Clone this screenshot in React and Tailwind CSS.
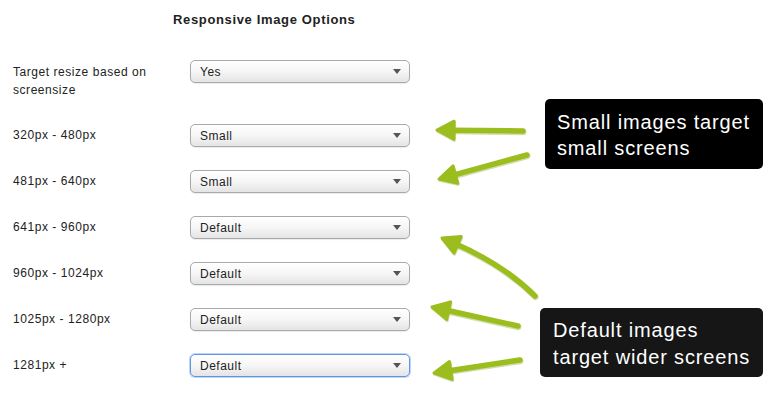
import React from "react";

const rows = [
  { label: "320px - 480px", value: "Small" },
  { label: "481px - 640px", value: "Small" },
  { label: "641px - 960px", value: "Default" },
  { label: "960px - 1024px", value: "Default" },
  { label: "1025px - 1280px", value: "Default" },
  { label: "1281px +", value: "Default", focused: true },
];

// arrows: tail -> tip, optional quadratic control point
const arrows = [
  { tail: [523, 131], tip: [437, 130] },
  { tail: [527, 155], tip: [439, 179] },
  { tail: [535, 296], tip: [442, 238], ctrl: [504, 265] },
  { tail: [518, 326], tip: [432, 307] },
  { tail: [520, 360], tip: [434, 373] },
];

function Arrow({ tail, tip, ctrl }) {
  const from = ctrl || tail;
  const dx = tip[0] - from[0];
  const dy = tip[1] - from[1];
  const len = Math.hypot(dx, dy);
  const ux = dx / len;
  const uy = dy / len;
  const L = 17;
  const W = 18;
  const bx = tip[0] - ux * L;
  const by = tip[1] - uy * L;
  const nx = -uy;
  const ny = ux;
  const head = `${tip[0]},${tip[1]} ${bx + (nx * W) / 2},${by + (ny * W) / 2} ${bx - (nx * W) / 2},${by - (ny * W) / 2}`;
  const sx = bx + ux * 3;
  const sy = by + uy * 3;
  const d = ctrl
    ? `M${tail[0]},${tail[1]} Q${ctrl[0]},${ctrl[1]} ${sx},${sy}`
    : `M${tail[0]},${tail[1]} L${sx},${sy}`;
  return (
    <g>
      <path d={d} fill="none" stroke="#7f9a1a" strokeOpacity="0.35" strokeWidth="6" strokeLinecap="round" transform="translate(0.5,1.2)" />
      <polygon points={head} fill="#7f9a1a" fillOpacity="0.35" stroke="#7f9a1a" strokeOpacity="0.35" strokeWidth="3" strokeLinejoin="round" transform="translate(0.5,1.2)" />
      <path d={d} fill="none" stroke="#9bbd1e" strokeWidth="5.5" strokeLinecap="round" />
      <polygon points={head} fill="#9bbd1e" stroke="#9bbd1e" strokeWidth="3" strokeLinejoin="round" />
    </g>
  );
}

function FakeSelect({ value, focused }) {
  return (
    <div
      className={
        "w-[220px] h-[23px] rounded-[5px] border flex items-center justify-between pl-[9px] pr-[8px] bg-linear-to-b from-white via-[#f6f6f6] to-[#e4e4e4] text-[12px] tracking-[0.5px] text-[#222] " +
        (focused
          ? "border-[#5f93e6] shadow-[0_0_0_1px_rgba(120,165,235,0.45)]"
          : "border-[#a9a9a9] shadow-[0_1px_1px_rgba(0,0,0,0.08)]")
      }
    >
      <span>{value}</span>
      <svg width="8" height="5" viewBox="0 0 8 5">
        <polygon points="0,0 8,0 4,5" fill="#555" />
      </svg>
    </div>
  );
}

export default function App() {
  return (
    <div
      className="relative w-[782px] h-[412px] bg-white overflow-hidden text-[#222]"
      style={{ fontFamily: '"Liberation Sans", Arial, sans-serif' }}
    >
      <div className="pt-[12px] pl-[173px] text-[13px] leading-[16px] tracking-[0.65px] font-bold text-[#222]">
        Responsive Image Options
      </div>

      <div className="pt-[32px] pl-[13px] flex flex-col">
        <div className="flex items-start h-[64px]">
          <div className="w-[177px] pt-[3px] text-[12px] leading-[18px] tracking-[0.55px]">
            Target resize based on
            <br />
            screensize
          </div>
          <FakeSelect value="Yes" />
        </div>
        {rows.map((r) => (
          <div key={r.label} className="flex items-start h-[46px]">
            <div className="w-[177px] text-[12px] leading-[23px] tracking-[0.55px]">{r.label}</div>
            <FakeSelect value={r.value} focused={r.focused} />
          </div>
        ))}
      </div>

      <div className="absolute left-[545px] top-[99px] w-[218px] h-[70px] rounded-[5px] bg-black text-white text-[20px] leading-[26px] tracking-[0.85px] pl-[12px] pt-[10px]">
        Small images target
        <br />
        small screens
      </div>
      <div className="absolute left-[540px] top-[308px] w-[223px] h-[69px] rounded-[5px] bg-[#161616] text-white text-[20px] leading-[27px] tracking-[0.85px] pl-[13px] pt-[9px]">
        Default images
        <br />
        target wider screens
      </div>

      <svg className="absolute inset-0 pointer-events-none" width="782" height="412">
        {arrows.map((a, i) => (
          <Arrow key={i} {...a} />
        ))}
      </svg>
    </div>
  );
}
